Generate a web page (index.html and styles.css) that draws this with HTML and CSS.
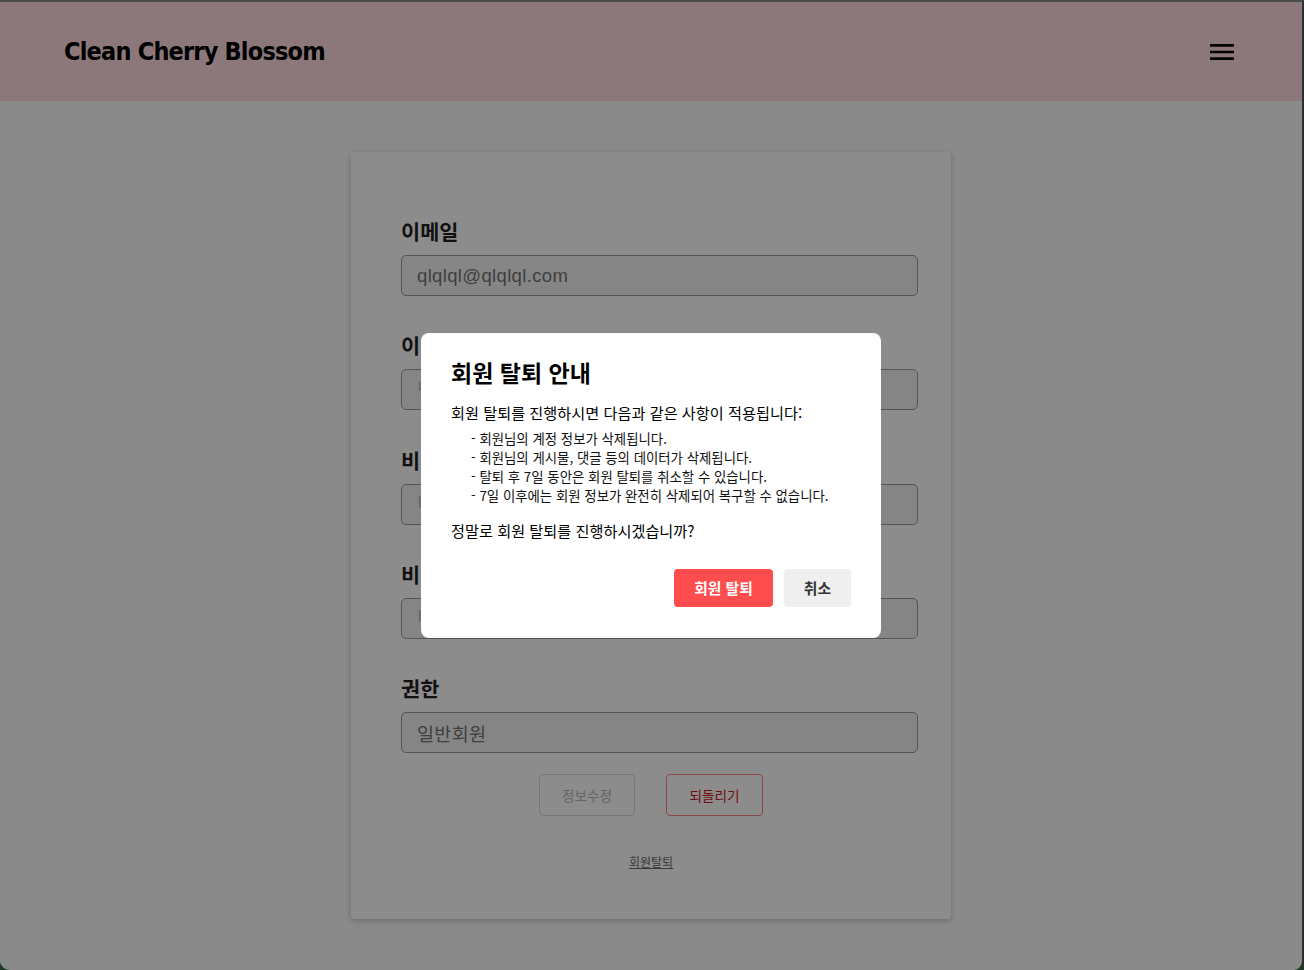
FILE: index.html
```html
<!DOCTYPE html>
<html lang="ko">
<head>
<meta charset="utf-8">
<title>Clean Cherry Blossom</title>
<link rel="stylesheet" href="styles.css">
</head>
<body>
<div class="window">
  <header class="topbar">
    <div class="logo">Clean Cherry Blossom</div>
    <button class="menu-btn" type="button" aria-label="메뉴">
      <svg width="32" height="32" viewBox="0 0 24 24"><path d="M3 18h18v-2H3v2zm0-5h18v-2H3v2zm0-7v2h18V6H3z" fill="#000"/></svg>
    </button>
  </header>
  <main class="content">
    <form class="card">
      <div class="fields">
        <div class="field">
          <label class="field-label">이메일</label>
          <input class="field-input" type="text" value="qlqlql@qlqlql.com" disabled>
        </div>
        <div class="field">
          <label class="field-label">이름</label>
          <input class="field-input" type="text" placeholder="변경할 이름을 입력하세요">
        </div>
        <div class="field">
          <label class="field-label">비밀번호</label>
          <input class="field-input" type="password" placeholder="비밀번호를 입력하세요">
        </div>
        <div class="field">
          <label class="field-label">비밀번호 확인</label>
          <input class="field-input" type="password" placeholder="비밀번호를 다시 입력하세요">
        </div>
        <div class="field">
          <label class="field-label">권한</label>
          <input class="field-input" type="text" value="일반회원" disabled>
        </div>
      </div>
      <div class="actions">
        <button class="btn btn-disabled" type="button" disabled>정보수정</button>
        <button class="btn btn-outline" type="button">되돌리기</button>
      </div>
      <a class="withdraw-link" href="#">회원탈퇴</a>
    </form>
  </main>
  <div class="overlay">
    <div class="modal">
      <h2 class="modal-title">회원 탈퇴 안내</h2>
      <p class="modal-text">회원 탈퇴를 진행하시면 다음과 같은 사항이 적용됩니다:</p>
      <ul class="modal-list">
        <li>- 회원님의 계정 정보가 삭제됩니다.</li>
        <li>- 회원님의 게시물, 댓글 등의 데이터가 삭제됩니다.</li>
        <li>- 탈퇴 후 7일 동안은 회원 탈퇴를 취소할 수 있습니다.</li>
        <li>- 7일 이후에는 회원 정보가 완전히 삭제되어 복구할 수 없습니다.</li>
      </ul>
      <p class="modal-question">정말로 회원 탈퇴를 진행하시겠습니까?</p>
      <div class="modal-actions">
        <button class="mbtn mbtn-danger" type="button">회원 탈퇴</button>
        <button class="mbtn mbtn-cancel" type="button">취소</button>
      </div>
    </div>
  </div>
</div>
</body>
</html>
```

FILE: styles.css
```css
* { box-sizing: border-box; }

html, body {
  margin: 0;
  padding: 0;
  background: #1d3a26;
}

body {
  font-family: "Noto Sans CJK KR", "Noto Sans", sans-serif;
  width: 1304px;
  height: 970px;
  overflow: hidden;
}

.window {
  position: relative;
  width: 1304px;
  height: 970px;
  background: #fbfbfb;
  border-top: 2px solid #4a4a4a;
  border-right: 2px solid #2e2e2e;
  border-radius: 0 0 10px 10px;
  overflow: hidden;
}

.topbar {
  height: 99px;
  background: #ffdae0;
  display: flex;
  align-items: center;
  justify-content: space-between;
  padding: 0 64px;
}

.logo {
  font-family: "DejaVu Sans Condensed", "DejaVu Sans", sans-serif;
  font-weight: 700;
  font-size: 25px;
  letter-spacing: -0.8px;
  color: #000;
}

.menu-btn {
  border: 0;
  background: none;
  padding: 0;
  width: 32px;
  height: 32px;
  display: block;
}
.menu-btn svg { display: block; }

.content {
  display: flex;
  justify-content: center;
  padding-top: 51px;
}

.card {
  width: 600px;
  background: #fff;
  border-radius: 4px;
  box-shadow: 0 2px 6px rgba(0, 0, 0, 0.22);
  padding: 67px 50px 49px;
  display: flex;
  flex-direction: column;
}

.fields {
  display: flex;
  flex-direction: column;
  gap: 37.3px;
}

.field {
  display: flex;
  flex-direction: column;
  gap: 12px;
}

.field-label {
  font-size: 20.8px;
  line-height: 24px;
  font-weight: 700;
  color: #1f1f1f;
}

.field-input {
  width: 517px;
  height: 41px;
  border: 1px solid #999;
  border-radius: 5px;
  background: #f3f3f3;
  padding: 0 15px;
  font-family: "Liberation Sans", "Noto Sans CJK KR", sans-serif;
  font-size: 18.5px;
  letter-spacing: 0.35px;
  color: #737373;
}
.field-input::placeholder { color: #bbb; }

.actions {
  display: flex;
  justify-content: center;
  gap: 31px;
  margin-top: 21px;
}

.btn {
  width: 96px;
  height: 42px;
  padding: 0;
  border-radius: 4px;
  background: transparent;
  font-family: "Noto Sans CJK KR", sans-serif;
  font-size: 13.6px;
  text-align: center;
}
.btn-disabled {
  border: 1px solid #d8d8d8;
  color: #b8b8b8;
}
.btn-outline {
  width: 97px;
  border: 1px solid #ff8080;
  color: #c81a1a;
}

.withdraw-link {
  align-self: center;
  margin-top: 37px;
  font-size: 12px;
  line-height: 17px;
  color: #6a6a6a;
  text-decoration: underline;
}

.overlay {
  position: absolute;
  inset: 0;
  background: rgba(0, 0, 0, 0.45);
  display: flex;
  align-items: center;
  justify-content: center;
}

.modal {
  width: 460px;
  background: #fff;
  border-radius: 8px;
  padding: 26px 30px 31px;
  color: #000;
  margin-top: -2px;
}

.modal-title {
  margin: 0 0 17px;
  font-size: 23px;
  line-height: 26px;
  font-weight: 700;
}

.modal-text {
  margin: 0;
  font-size: 15.2px;
  line-height: 20px;
}

.modal-list {
  list-style: none;
  margin: 7px 0 15px;
  padding: 0 0 0 20px;
  font-size: 13.4px;
  line-height: 19px;
  color: #111;
}

.modal-question {
  margin: 0;
  font-size: 15.2px;
  line-height: 20px;
}

.modal-actions {
  display: flex;
  justify-content: flex-end;
  gap: 11px;
  margin-top: 29px;
}

.mbtn {
  height: 38px;
  padding: 0 20px;
  border: 0;
  border-radius: 4px;
  font-family: "Noto Sans CJK KR", sans-serif;
  font-size: 14.8px;
  font-weight: 700;
}
.mbtn-danger {
  background: #ff4d4f;
  color: #fff;
}
.mbtn-cancel {
  background: #efefef;
  color: #333;
}
```
